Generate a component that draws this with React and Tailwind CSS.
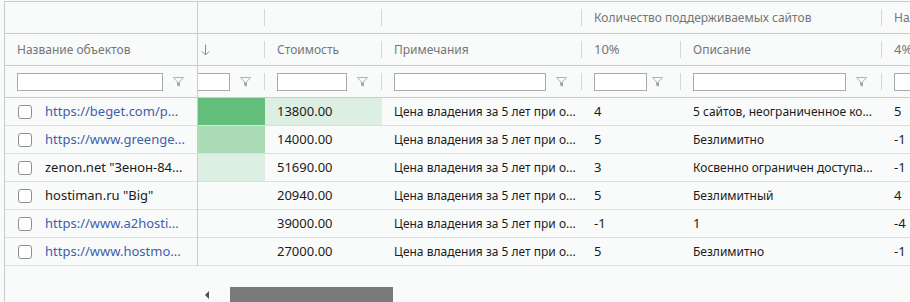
import React from 'react';

const FONT = { fontFamily: '"Noto Sans", "Open Sans", sans-serif' };

// scrolled columns, widths include the header separator on the right
const COLUMNS = [
  { key: 'rank', w: 'w-[67px]', header: null, inputW: 'w-[32px]', cut: true },
  { key: 'cost', w: 'w-[117px]', header: 'Стоимость', inputW: 'w-[70px]' },
  { key: 'notes', w: 'w-[200px]', header: 'Примечания', inputW: 'w-[152px]' },
  { key: 'p10', w: 'w-[99px]', header: '10%', inputW: 'w-[53px]' },
  { key: 'desc', w: 'w-[201px]', header: 'Описание', inputW: 'w-[153px]' },
  { key: 'p4', w: 'w-[80px]', header: '4%', inputW: 'w-[60px]' },
];

const ROWS = [
  { name: 'https://beget.com/p...', link: true, rank: 'bg-[#63be7b]', cost: '13800.00', costBg: 'bg-[#ddeee3]', p10: '4', desc: '5 сайтов, неограниченное ко...', p4: '5' },
  { name: 'https://www.greenge...', link: true, rank: 'bg-[#aadbb6]', cost: '14000.00', p10: '5', desc: 'Безлимитно', p4: '-1' },
  { name: 'zenon.net "Зенон-84...', rank: 'bg-[#ddeee3]', cost: '51690.00', p10: '3', desc: 'Косвенно ограничен доступа...', p4: '-1' },
  { name: 'hostiman.ru "Big"', cost: '20940.00', p10: '5', desc: 'Безлимитный', p4: '4' },
  { name: 'https://www.a2hosti...', link: true, cost: '39000.00', p10: '-1', desc: '1', p4: '-4' },
  { name: 'https://www.hostmo...', link: true, cost: '27000.00', p10: '5', desc: 'Безлимитно', p4: '-1' },
];

const NOTE = 'Цена владения за 5 лет при о...';

function Funnel() {
  return (
    <svg width="11" height="10" viewBox="0 0 11 10" className="shrink-0">
      <path d="M0.5 0.5h10l-4 4.5v4l-2-1v-3z" fill="none" stroke="#b0b2b2" strokeWidth="1" />
      <path d="M4.5 5.5v3l2 1v-4z" fill="#a2a4a4" />
    </svg>
  );
}

function SortDown() {
  return (
    <svg width="9" height="12" viewBox="0 0 9 12" className="shrink-0">
      <path d="M4.5 0.5v10.5M0.8 7.3l3.7 3.7 3.7-3.7" fill="none" stroke="#8a8c8c" strokeWidth="1" />
    </svg>
  );
}

function Sep() {
  return <div className="w-px h-[17px] bg-[#d6d8d8] shrink-0" />;
}

function FilterInput({ width, cut }) {
  return (
    <div className={`${width} h-[18px] bg-white border border-[#a9abac] shrink-0 ${cut ? 'border-l-0' : ''}`} />
  );
}

export default function App() {
  return (
    <div className="w-[910px] h-[302px] overflow-hidden bg-[#f9fbfb] text-[13px]" style={FONT}>
      <div className="ml-[4px] mt-px h-[301px] border-l border-t border-[#c9cccc] flex">
        {/* frozen part */}
        <div className="w-[193px] shrink-0">
          <div className="border-r border-[#c9cccc]">
            <div className="h-[32px] border-b border-[#c9cccc]" />
            <div className="h-[32px] border-b border-[#c9cccc] flex items-center pl-[12px] text-[12px] text-[#757575]">
              Название объектов
            </div>
            <div className="h-[32px] border-b border-[#c9cccc] flex items-center pl-[12px]">
              <FilterInput width="w-[146px]" />
              <div className="ml-[10px]"><Funnel /></div>
            </div>
            {ROWS.map((r) => (
              <div key={r.name} className="h-[28px] border-b border-[#dcdfdf] flex items-center pl-[13px] pr-[6px]">
                <div className="w-[14px] h-[14px] shrink-0 rounded-[3px] border border-[#8d8f8f] bg-white" />
                <span className={`ml-[13px] truncate ${r.link ? 'text-[#3f5eab]' : 'text-[#1b1b1b]'}`}>{r.name}</span>
              </div>
            ))}
          </div>
        </div>

        {/* scrolled part */}
        <div className="flex-1 overflow-hidden flex flex-col">
          {/* band row */}
          <div className="h-[32px] shrink-0 border-b border-[#c9cccc] flex text-[12px] text-[#757575]">
            <div className="w-[67px] flex items-center justify-end shrink-0"><Sep /></div>
            <div className="w-[117px] flex items-center justify-end shrink-0"><Sep /></div>
            <div className="w-[200px] flex items-center justify-end shrink-0"><Sep /></div>
            <div className="w-[300px] flex items-center justify-between pl-[12px] shrink-0">
              <span className="whitespace-nowrap">Количество поддерживаемых сайтов</span>
              <Sep />
            </div>
            <div className="w-[80px] flex items-center pl-[12px] shrink-0">
              <span className="whitespace-nowrap">Наличие</span>
            </div>
          </div>

          {/* column headers */}
          <div className="h-[32px] shrink-0 border-b border-[#c9cccc] flex text-[#757575]">
            {COLUMNS.map((c, i) => (
              <div key={c.key} className={`${c.w} shrink-0 flex items-center justify-between ${c.cut ? 'pl-[3px]' : 'pl-[12px]'}`}>
                {c.header ? (
                  <span className={`whitespace-nowrap ${c.header.includes('%') ? 'text-[13px]' : 'text-[12px]'}`}>{c.header}</span>
                ) : (
                  <SortDown />
                )}
                {i < COLUMNS.length - 1 && <Sep />}
              </div>
            ))}
          </div>

          {/* filter row */}
          <div className="h-[32px] shrink-0 border-b border-[#c9cccc] flex">
            {COLUMNS.map((c, i) => (
              <div key={c.key} className={`${c.w} shrink-0 flex items-center ${c.cut ? '' : 'pl-[12px]'}`}>
                <FilterInput width={c.inputW} cut={c.cut} />
                {i < COLUMNS.length - 1 && (
                  <>
                    <div className={c.key === 'p10' ? 'ml-[5px]' : 'ml-[10px]'}><Funnel /></div>
                    <div className="flex-1" />
                    <Sep />
                  </>
                )}
              </div>
            ))}
          </div>

          {/* data rows */}
          {ROWS.map((r) => (
            <div key={r.name} className="h-[28px] shrink-0 border-b border-[#dcdfdf] flex text-[#1b1b1b]">
              <div className={`w-[67px] shrink-0 ${r.rank || ''}`} />
              <div className={`w-[117px] shrink-0 flex items-center pl-[12px] ${r.costBg || ''}`}>{r.cost}</div>
              <div className="w-[200px] shrink-0 flex items-center pl-[12px] pr-[4px] text-[12px]">
                <span className="truncate">{NOTE}</span>
              </div>
              <div className="w-[99px] shrink-0 flex items-center pl-[12px]">{r.p10}</div>
              <div className={`w-[201px] shrink-0 flex items-center pl-[12px] pr-[4px] ${/\d/.test(r.desc[0]) && r.desc.length < 3 ? '' : 'text-[12px]'}`}>
                <span className="truncate">{r.desc}</span>
              </div>
              <div className="w-[80px] shrink-0 flex items-center pl-[12px]">{r.p4}</div>
            </div>
          ))}

          {/* horizontal scrollbar */}
          <div className="mt-[20px] h-[17px] shrink-0 flex items-center">
            <div className="w-[17px] h-[17px] flex items-center justify-center shrink-0">
              <div className="w-0 h-0 border-y-[4px] border-y-transparent border-r-[4px] border-r-[#505050]" />
            </div>
            <div className="ml-[15px] w-[163px] h-[15px] bg-[#7a7a7a]" />
          </div>
        </div>
      </div>
    </div>
  );
}
